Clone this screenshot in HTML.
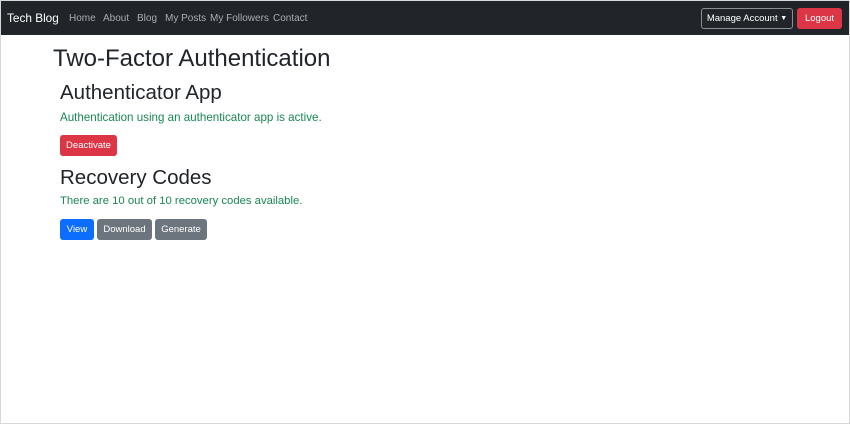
<!DOCTYPE html>
<html><head><style>
body{margin:0;width:850px;height:424px;overflow:hidden;background:#fff;font-family:"Liberation Sans",sans-serif;position:relative}
.frame{position:absolute;left:0;top:0;width:848px;height:422px;border:1px solid #d8d8d8}
.nav{position:absolute;left:1px;top:1px;width:848px;height:34px;background:#212529}
.a{position:absolute;white-space:nowrap}
.l{color:#a9acaf;font-size:10px;top:12px}
.btn{position:absolute;border-radius:3px;color:#fff;font-size:9.5px;display:flex;align-items:center;justify-content:center;box-sizing:border-box}
.g{color:#198754;font-size:11.6px}
</style></head><body>
<div class="frame"></div>
<div class="nav">
<div class="a" style="left:6px;top:10px;color:#fff;font-size:11.8px">Tech Blog</div>
<div class="a l" style="left:68px">Home</div>
<div class="a l" style="left:102px">About</div>
<div class="a l" style="left:136px">Blog</div>
<div class="a l" style="left:164px">My Posts</div>
<div class="a l" style="left:209px">My Followers</div>
<div class="a l" style="left:272px">Contact</div>
<div class="btn" style="left:700px;top:7px;width:92px;height:21px;border:1px solid #8a8f94">Manage Account&nbsp;<span style="font-size:7px">▼</span></div>
<div class="btn" style="left:796px;top:7px;width:45px;height:21px;background:#dc3545">Logout</div>
</div>
<div class="a" style="left:53px;top:45px;font-size:24px;color:#212529">Two-Factor Authentication</div>
<div class="a" style="left:60px;top:81px;font-size:20.5px;color:#212529">Authenticator App</div>
<div class="a g" style="left:60px;top:111px">Authentication using an authenticator app is active.</div>
<div class="btn" style="left:60px;top:135px;width:57px;height:21px;background:#dc3545">Deactivate</div>
<div class="a" style="left:60px;top:166px;font-size:20.5px;color:#212529">Recovery Codes</div>
<div class="a g" style="left:60px;top:195px;font-size:11.3px">There are 10 out of 10 recovery codes available.</div>
<div class="btn" style="left:60px;top:219px;width:34px;height:21px;background:#0d6efd">View</div>
<div class="btn" style="left:97px;top:219px;width:55px;height:21px;background:#6c757d">Download</div>
<div class="btn" style="left:155px;top:219px;width:52px;height:21px;background:#6c757d">Generate</div>
</body></html>
